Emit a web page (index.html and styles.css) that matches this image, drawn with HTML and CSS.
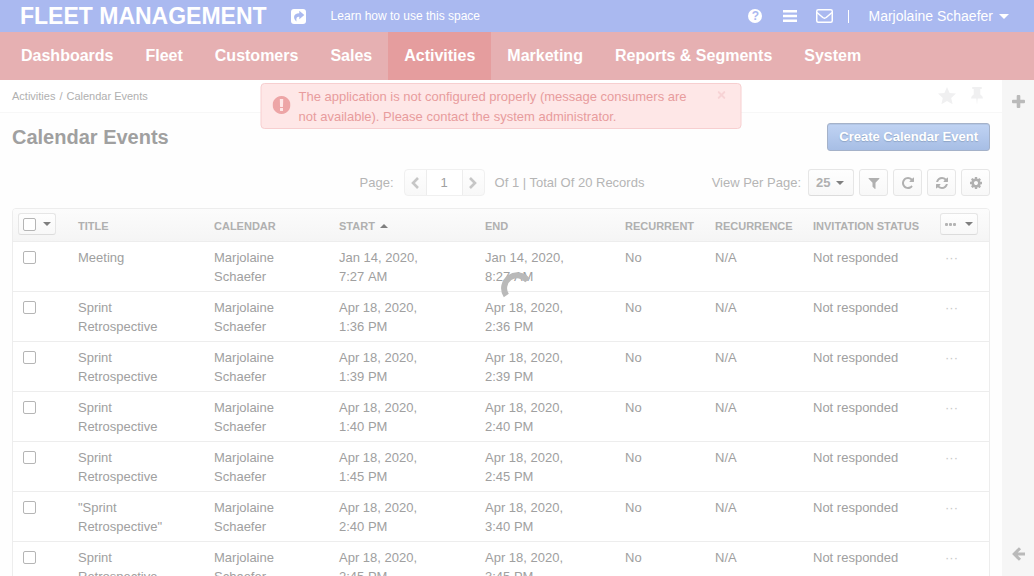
FILE: index.html
```
<!DOCTYPE html>
<html lang="en">
<head>
<meta charset="utf-8">
<title>Calendar Events</title>
<link rel="stylesheet" href="styles.css">
</head>
<body>
<svg class="sprite" aria-hidden="true">
  <symbol id="caret" viewBox="0 0 8 4"><path d="M0 0h8L4 4z"/></symbol>
</svg>
<div class="app">
  <header class="topbar">
    <a class="brand" href="#">FLEET MANAGEMENT</a>
    <a class="share" href="#" aria-label="Share">
      <svg width="15" height="15" viewBox="0 0 15 15"><rect width="15" height="15" rx="3" fill="#fff"/><path d="M8.300 1.800L13.300 6 8.300 10.200V7.800C5.800 7.800 4.900 9 5.600 12.600 2.200 10 1.500 4.400 8.300 4.200z" fill="#aab9f0"/></svg>
    </a>
    <a class="learn" href="#">Learn how to use this space</a>
    <div class="tools">
      <a class="help" href="#" aria-label="Help">?</a>
      <button class="plain" aria-label="Shortcuts"><svg width="14" height="12" viewBox="0 0 14 12" fill="#fff"><path d="M0 0h14v2.500H0zM0 4.700h14v2.500H0zM0 9.500h14V12H0z"/></svg></button>
      <button class="plain" aria-label="Emails"><svg width="17" height="14" viewBox="0 0 17 14" fill="none" stroke="#fff" stroke-width="1.500"><rect x=".75" y=".75" width="15.500" height="12.500" rx="1.500"/><path d="M1 3.500L6.800 8.500Q8.500 9.800 10.200 8.500L16 3.500"/></svg></button>
      <span class="divider"></span>
      <button class="plain user">Marjolaine Schaefer <svg width="10" height="5"><use href="#caret"/></svg></button>
    </div>
  </header>
  <nav class="menu">
    <a href="#">Dashboards</a>
    <a href="#">Fleet</a>
    <a href="#">Customers</a>
    <a href="#">Sales</a>
    <a href="#" class="active">Activities</a>
    <a href="#">Marketing</a>
    <a href="#">Reports &amp; Segments</a>
    <a href="#">System</a>
  </nav>
  <div class="body">
    <main class="content">
      <div class="crumbs">
        <span class="trail"><a href="#">Activities</a><span>/</span><a href="#">Calendar Events</a></span>
        <span class="marks">
          <button class="plain" aria-label="Favorite"><svg width="18" height="18" viewBox="0 0 18 18" fill="#f0f0f1"><path d="M9 0l2.600 5.900 6.400.7-4.800 4.300 1.400 6.400L9 14l-5.600 3.300 1.400-6.400L0 6.600l6.400-.7z"/></svg></button>
          <button class="plain" aria-label="Pin"><svg width="12" height="18" viewBox="0 0 12 18" fill="#f0f0f1"><path d="M2 0h8q1 0 1 1t-1 1H9.300v5.500Q12 9 12 11.500H6.700L6 18l-.7-6.500H0Q0 9 2.700 7.500V2H2Q1 2 1 1t1-1z"/></svg></button>
        </span>
      </div>
      <div class="alert" role="alert">
        <svg width="18" height="18" viewBox="128 128 1536 1536" fill="#eda5a6"><path d="M896 128q209 0 385.500 103t279.500 279.500 103 385.500-103 385.500-279.500 279.500-385.500 103-385.500-103-279.500-279.500-103-385.500 103-385.500 279.500-279.500 385.500-103zm128 1247v-190q0-14-9-23.500t-22-9.500h-192q-13 0-23 10t-10 23v190q0 13 10 23t23 10h192q13 0 22-9.500t9-23.500zm-2-344l18-621q0-12-10-18-10-8-24-8h-220q-14 0-24 8-10 6-10 18l17 621q0 10 10 17.500t24 7.500h185q14 0 23.500-7.500t10.500-17.500z"/></svg>
        <p>The application is not configured properly (message consumers are not available). Please contact the system administrator.</p>
        <button class="plain close" aria-label="Close"><svg width="8" height="8" viewBox="0 0 8 8" stroke="#f7d3d5" stroke-width="2"><path d="M.6.6l6.800 6.800M7.400.6L.6 7.400"/></svg></button>
      </div>
      <div class="heading">
        <h1>Calendar Events</h1>
        <button class="create">Create Calendar Event</button>
      </div>
      <div class="toolbar">
        <div class="pager">
          <label for="page">Page:</label>
          <span class="pages">
            <button aria-label="Previous"><svg width="8" height="12" viewBox="0 0 8 12" fill="none" stroke="#c6c6c6" stroke-width="2.600"><path d="M7 1L2 6l5 5"/></svg></button>
            <input id="page" type="text" value="1">
            <button aria-label="Next"><svg width="8" height="12" viewBox="0 0 8 12" fill="none" stroke="#c6c6c6" stroke-width="2.600"><path d="M1 1l5 5-5 5"/></svg></button>
          </span>
          <span>Of 1 | Total Of 20 Records</span>
        </div>
        <div class="actions">
          <label for="size">View Per Page:</label>
          <span class="size"><select id="size"><option>25</option><option>50</option></select><svg width="8" height="4"><use href="#caret"/></svg></span>
          <button class="tool" aria-label="Filter"><svg width="12" height="12" viewBox="128 128 1536 1536"><path d="M1595 295q17 41-14 70l-493 493v742q0 42-39 59-13 5-25 5-27 0-45-19l-256-256q-19-19-19-45v-486l-493-493q-31-29-14-70 17-39 59-39h1280q42 0 59 39z"/></svg></button>
          <button class="tool" aria-label="Refresh"><svg width="12" height="12" viewBox="128 128 1536 1536"><path d="M1664 256v448q0 26-19 45t-45 19h-448q-42 0-59-40-17-39 14-69l138-138q-148-137-349-137-104 0-198.500 40.500t-163.500 109.500-109.500 163.500-40.500 198.500 40.500 198.500 109.500 163.500 163.500 109.500 198.500 40.500q119 0 225-52t179-147q7-10 23-12 15 0 25 9l137 138q9 8 9.500 20.500t-7.500 22.500q-109 132-264 204.500t-327 72.500q-156 0-298-61t-245-164-164-245-61-298 61-298 164-245 245-164 298-61q147 0 284.500 55.500t244.500 156.500l130-129q29-31 70-14 39 17 39 59z"/></svg></button>
          <button class="tool" aria-label="Reset"><svg width="12" height="12" viewBox="128 128 1536 1536"><path d="M1639 1056q0 5-1 7-64 268-268 434.500t-478 166.500q-146 0-282.500-55t-243.500-157l-129 129q-19 19-45 19t-45-19-19-45v-448q0-26 19-45t45-19h448q26 0 45 19t19 45-19 45l-137 137q71 66 161 102t187 36q134 0 250-65t186-179q11-17 53-117 8-23 30-23h192q13 0 22.500 9.500t9.500 22.500zm25-800v448q0 26-19 45t-45 19h-448q-26 0-45-19t-19-45 19-45l138-138q-148-137-349-137-134 0-250 65t-186 179q-11 17-53 117-8 23-30 23h-199q-13 0-22.500-9.500t-9.500-22.500v-7q65-268 270-434.500t480-166.500q146 0 284 55.500t245 156.500l130-129q19-19 45-19t45 19 19 45z"/></svg></button>
          <button class="tool" aria-label="Settings"><svg width="12" height="12" viewBox="128 128 1536 1536"><path d="M1152 896q0-106-75-181t-181-75-181 75-75 181 75 181 181 75 181-75 75-181zm512-109v222q0 12-8 23t-20 13l-185 28q-19 54-39 91 35 50 107 138 10 12 10 25t-9 23q-27 37-99 108t-94 71q-12 0-26-9l-138-108q-44 23-91 38-16 136-29 186-7 28-36 28h-222q-14 0-24.500-8.500t-11.500-21.500l-28-184q-49-16-90-37l-141 107q-10 9-25 9-14 0-25-11-126-114-165-168-7-10-7-23 0-12 8-23 15-21 51-66.500t54-70.500q-27-50-41-99l-183-27q-13-2-21-12.500t-8-23.500v-222q0-12 8-23t19-13l186-28q14-46 39-92-40-57-107-138-10-12-10-24 0-10 9-23 26-36 98.500-107.500t94.500-71.500q13 0 26 10l138 107q44-23 91-38 16-136 29-186 7-28 36-28h222q14 0 24.500 8.500t11.500 21.500l28 184q49 16 90 37l142-107q9-9 24-9 13 0 25 10 129 119 165 170 7 8 7 22 0 12-8 23-15 21-51 66.500t-54 70.500q26 50 41 98l183 28q13 2 21 12.500t8 23.500z"/></svg></button>
        </div>
      </div>
      <div class="grid">
        <table>
          <colgroup><col class="c-check"><col class="c-title"><col class="c-cal"><col class="c-start"><col class="c-end"><col class="c-rec"><col class="c-recur"><col class="c-status"><col class="c-more"></colgroup>
          <thead>
            <tr>
              <th class="box"><span class="drop"><input type="checkbox" aria-label="Select all"><svg width="8" height="4"><use href="#caret"/></svg></span></th>
              <th>TITLE</th>
              <th>CALENDAR</th>
              <th>START <svg class="sorted" width="8" height="4"><use href="#caret"/></svg></th>
              <th>END</th>
              <th>RECURRENT</th>
              <th>RECURRENCE</th>
              <th>INVITATION STATUS</th>
              <th class="more"><button class="drop" aria-label="Mass actions"><svg width="11" height="3" viewBox="0 0 11 3" fill="#b4b4b4"><rect width="3" height="3" rx="1"/><rect x="4" width="3" height="3" rx="1"/><rect x="8" width="3" height="3" rx="1"/></svg><svg width="8" height="4"><use href="#caret"/></svg></button></th>
            </tr>
          </thead>
          <tbody>
            <tr><td class="box"><input type="checkbox" aria-label="Select row"></td><td>Meeting</td><td>Marjolaine Schaefer</td><td>Jan 14, 2020, 7:27&nbsp;AM</td><td>Jan 14, 2020, 8:27&nbsp;AM</td><td>No</td><td>N/A</td><td>Not responded</td><td class="more"><a href="#">···</a></td></tr>
            <tr><td class="box"><input type="checkbox" aria-label="Select row"></td><td>Sprint Retrospective</td><td>Marjolaine Schaefer</td><td>Apr 18, 2020, 1:36&nbsp;PM</td><td>Apr 18, 2020, 2:36&nbsp;PM</td><td>No</td><td>N/A</td><td>Not responded</td><td class="more"><a href="#">···</a></td></tr>
            <tr><td class="box"><input type="checkbox" aria-label="Select row"></td><td>Sprint Retrospective</td><td>Marjolaine Schaefer</td><td>Apr 18, 2020, 1:39&nbsp;PM</td><td>Apr 18, 2020, 2:39&nbsp;PM</td><td>No</td><td>N/A</td><td>Not responded</td><td class="more"><a href="#">···</a></td></tr>
            <tr><td class="box"><input type="checkbox" aria-label="Select row"></td><td>Sprint Retrospective</td><td>Marjolaine Schaefer</td><td>Apr 18, 2020, 1:40&nbsp;PM</td><td>Apr 18, 2020, 2:40&nbsp;PM</td><td>No</td><td>N/A</td><td>Not responded</td><td class="more"><a href="#">···</a></td></tr>
            <tr><td class="box"><input type="checkbox" aria-label="Select row"></td><td>Sprint Retrospective</td><td>Marjolaine Schaefer</td><td>Apr 18, 2020, 1:45&nbsp;PM</td><td>Apr 18, 2020, 2:45&nbsp;PM</td><td>No</td><td>N/A</td><td>Not responded</td><td class="more"><a href="#">···</a></td></tr>
            <tr><td class="box"><input type="checkbox" aria-label="Select row"></td><td>"Sprint Retrospective"</td><td>Marjolaine Schaefer</td><td>Apr 18, 2020, 2:40&nbsp;PM</td><td>Apr 18, 2020, 3:40&nbsp;PM</td><td>No</td><td>N/A</td><td>Not responded</td><td class="more"><a href="#">···</a></td></tr>
            <tr><td class="box"><input type="checkbox" aria-label="Select row"></td><td>Sprint Retrospective</td><td>Marjolaine Schaefer</td><td>Apr 18, 2020, 2:45&nbsp;PM</td><td>Apr 18, 2020, 3:45&nbsp;PM</td><td>No</td><td>N/A</td><td>Not responded</td><td class="more"><a href="#">···</a></td></tr>
          </tbody>
        </table>
      </div>
    </main>
    <aside class="side">
      <button class="plain" aria-label="Add widget"><svg width="13" height="13" viewBox="0 0 13 13" fill="#bababa"><path d="M4.700 1q0-1 1-1h1.600q1 0 1 1v3.700H12q1 0 1 1v1.600q0 1-1 1H8.300V12q0 1-1 1H5.700q-1 0-1-1V8.300H1q-1 0-1-1V5.700q0-1 1-1h3.700z"/></svg></button>
      <button class="plain" aria-label="Expand sidebar"><svg width="13" height="14" viewBox="0 0 13 14" fill="none" stroke="#bababa" stroke-width="3"><path d="M8 1.200L2.200 7 8 12.800M2.500 7H13"/></svg></button>
    </aside>
  </div>
  <svg class="spinner" width="32" height="32" viewBox="0 0 32 32" fill="none" stroke="#b9b9b9" stroke-width="6"><path d="M5.300 23.500A13 13 0 0 1 26.600 8.600"/></svg>
</div>
</body>
</html>
```
FILE: styles.css
```
* { box-sizing: border-box; }
body {
  margin: 0;
  font: 13px/19px "Liberation Sans", Arial, sans-serif;
  color: #a0a0a0;
  background: #fefefe;
}
a { color: inherit; text-decoration: none; }
button, input, select { font: inherit; color: inherit; margin: 0; }
svg { display: block; flex: none; }
.sprite { position: absolute; width: 0; height: 0; }
.app { display: flex; flex-direction: column; height: 100vh; overflow: hidden; }
.plain { display: flex; align-items: center; padding: 0; border: 0; background: none; }

.topbar {
  display: flex;
  flex: none;
  align-items: center;
  height: 32px;
  padding: 0 25px 0 20px;
  background: #aab9f0;
  color: #fff;
}
.brand { font-size: 23px; line-height: 32px; font-weight: bold; }
.share { margin: 0 25px 0 24px; }
.learn { font-size: 12px; }
.tools { display: flex; align-items: center; gap: 19px; margin-left: auto; }
.help {
  width: 14px;
  height: 14px;
  margin-right: 2px;
  border-radius: 50%;
  background: #fff;
  color: #aab9f0;
  font-size: 12px;
  line-height: 14px;
  font-weight: bold;
  text-align: center;
}
.divider { width: 1px; height: 13px; margin-left: -4px; background: #fff; }
.user { gap: 6px; font-size: 14px; fill: #fff; }

.menu {
  display: flex;
  flex: none;
  height: 48px;
  padding-left: 5px;
  background: #e6b0b2;
  color: #fff;
  font-size: 16px;
  line-height: 48px;
  font-weight: bold;
}
.menu a { padding: 0 16px; }
.menu .active { background: #e59d9e; }

.body { display: flex; flex: 1; min-height: 0; }
.content { position: relative; flex: 1; min-width: 0; overflow: hidden; }
.side {
  display: flex;
  flex-direction: column;
  align-items: center;
  justify-content: space-between;
  width: 32px;
  padding: 15px 0;
  background: #f6f6f6;
}

.crumbs {
  display: flex;
  align-items: center;
  justify-content: space-between;
  height: 33px;
  padding: 0 19px 0 12px;
  border-bottom: 1px solid #f7f7f7;
  background: #fff;
  font-size: 11px;
  color: #b0b0b0;
}
.trail { display: flex; gap: 4px; }
.marks { display: flex; gap: 15px; }

.alert {
  position: absolute;
  top: 3px;
  left: 50%;
  display: flex;
  width: 48%;
  padding: 3px 15px 1px 11px;
  border: 1px solid #f7cfd0;
  border-radius: 4px;
  background: #fee7e7;
  color: #e89c9d;
  line-height: 20px;
  transform: translateX(-50%);
}
.alert > svg { margin: 9px 8px 0 0; }
.alert p { flex: 1; margin: 0; padding-right: 24px; }
.close { align-self: flex-start; margin-top: 4px; }

.heading { display: flex; align-items: center; justify-content: space-between; padding: 10px 12px 0; }
h1 { margin: 0; font-size: 20px; line-height: 28px; }
.create {
  height: 28px;
  padding: 0 11px;
  border: 1px solid #a5b2c9;
  border-radius: 3px;
  background: linear-gradient(#c0d3f3, #a7bee5);
  box-shadow: inset 0 1px #b2c6e6;
  color: #fff;
  font-weight: bold;
  line-height: 26px;
  text-shadow: 0 1px 1px #8fa5c6;
}

.toolbar {
  display: grid;
  grid-template-columns: 1fr auto 1fr;
  align-items: center;
  padding: 18px 12px 12px;
  color: #b5b5b5;
}
.pager { display: flex; grid-column: 2; align-items: center; gap: 10px; padding-left: 2px; }
.pages {
  display: flex;
  height: 27px;
  border: 1px solid #f0f0f0;
  border-radius: 4px;
  background: linear-gradient(#fefefe, #f8f8f8);
}
.pages button {
  display: flex;
  align-items: center;
  justify-content: center;
  width: 21px;
  padding: 0;
  border: 0;
  background: none;
}
.pages input {
  width: 37px;
  padding: 0;
  border: solid #ededed;
  border-width: 0 1px;
  background: #fff;
  color: #a0a0a0;
  text-align: center;
}
.actions { display: flex; align-items: center; justify-content: flex-end; gap: 5px; }
.actions label { margin-right: 2px; }
.size, .tool, .drop {
  border: 1px solid #e6e6e6;
  border-radius: 3px;
  background: linear-gradient(#fefefe, #f8f8f8);
}
.size { display: flex; align-items: center; width: 46px; height: 27px; padding: 0 9px 0 7px; border-bottom-color: #dcdcdc; fill: #7f7f7f; }
.size select { flex: 1; min-width: 0; padding: 0; border: 0; background: none; appearance: none; font-weight: bold; color: #b0b0b0; }
.tool { display: flex; align-items: center; justify-content: center; width: 29px; height: 27px; padding: 0; fill: #b0b0b0; }

.grid { margin: 0 12px; border: 1px solid #ededed; border-radius: 4px 4px 0 0; overflow: hidden; background: #fff; }
table { width: 100%; border-collapse: separate; border-spacing: 0; table-layout: fixed; text-align: left; }
.c-check { width: 55px; }
.c-title { width: 136px; }
.c-cal { width: 125px; }
.c-start { width: 146px; }
.c-end { width: 140px; }
.c-rec { width: 90px; }
.c-recur { width: 98px; }
.c-status { width: 127px; }
.c-more { width: 59px; }
th, td { border-bottom: 1px solid #ededed; }
th {
  height: 33px;
  padding: 2px 0 0 10px;
  background: linear-gradient(#fcfcfc, #f5f5f5);
  font-size: 11px;
  color: #b0b0b0;
  white-space: nowrap;
}
td { height: 50px; padding: 6px 20px 5px 10px; vertical-align: top; }
th.box { padding: 0 0 2px 5px; }
th.more { padding: 0 0 2px 10px; }
td.more { padding-right: 0; padding-left: 15px; color: #c8c8c8; }
.sorted { display: inline-block; margin: 0 0 1px 2px; vertical-align: middle; fill: #7f7f7f; transform: rotate(180deg); }
.drop {
  display: flex;
  align-items: center;
  justify-content: space-between;
  width: 38px;
  height: 22px;
  padding: 0 4px;
  border-bottom-color: #dcdcdc;
  fill: #7f7f7f;
}
input[type="checkbox"] {
  display: block;
  width: 13px;
  height: 13px;
  border: 1px solid #b5b5b5;
  border-radius: 2px;
  background: #fff;
  appearance: none;
}
td.box { padding-top: 9px; padding-right: 0; }

.spinner { position: fixed; top: 50%; left: 50%; margin: -16px 0 0 -16px; }
```
